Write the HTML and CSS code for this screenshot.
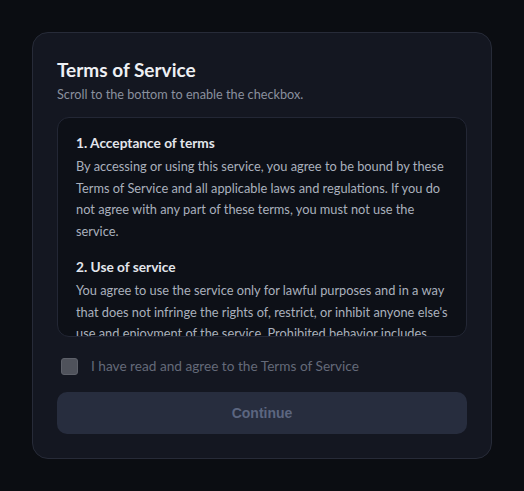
FILE: index.html
```html
<!DOCTYPE html>
<html lang="en">
<head>
<meta charset="utf-8">
<title>Terms of Service</title>
<link rel="stylesheet" href="styles.css">
</head>
<body>
<main class="page">
  <section class="card">
    <h1 class="title">Terms of Service</h1>
    <p class="subtitle">Scroll to the bottom to enable the checkbox.</p>
    <div class="terms">
      <h2 class="terms-heading">1. Acceptance of terms</h2>
      <p class="terms-text">By accessing or using this service, you agree to be bound by these Terms of Service and all applicable laws and regulations. If you do not agree with any part of these terms, you must not use the service.</p>
      <h2 class="terms-heading">2. Use of service</h2>
      <p class="terms-text">You agree to use the service only for lawful purposes and in a way that does not infringe the rights of, restrict, or inhibit anyone else's use and enjoyment of the service. Prohibited behavior includes harassing or causing distress or inconvenience to any other user.</p>
    </div>
    <label class="agree">
      <span class="box"></span>
      <span class="agree-text">I have read and agree to the Terms of Service</span>
    </label>
    <button class="continue" disabled>Continue</button>
  </section>
</main>
</body>
</html>
```

FILE: styles.css
```css
* { box-sizing: border-box; }
html, body { margin: 0; padding: 0; }
body {
  background: #0b0d12;
  font-family: Lato, "Open Sans", sans-serif;
  width: 524px;
  height: 491px;
  overflow: hidden;
}
.page {
  padding: 32px 32px 0 32px;
}
.card {
  width: 460px;
  height: 427px;
  background: #141721;
  border: 1px solid #272b38;
  border-radius: 16px;
  padding: 24px 24px 0 24px;
  display: flex;
  flex-direction: column;
}
.title {
  margin: 1px 0 0 0;
  font-size: 19px;
  font-weight: 700;
  color: #eef0f4;
  line-height: 24px;
}
.subtitle {
  margin: 3px 0 0 0;
  font-size: 12.7px;
  color: #8a909e;
  line-height: 18px;
}
.terms {
  margin-top: 14px;
  height: 220px;
  overflow: hidden;
  background: #0d1017;
  border: 1px solid #232735;
  border-radius: 12px;
  padding: 14px 18px;
}
.terms-heading {
  margin: 0 0 2px 0;
  font-size: 13.7px;
  font-weight: 700;
  color: #e3e6ec;
  line-height: 22px;
}
.terms-text {
  margin: 0 0 13px 0;
  font-size: 12.8px;
  color: #aab0bd;
  line-height: 21.7px;
}
.agree {
  display: flex;
  align-items: center;
  gap: 13px;
  margin-top: 19px;
  padding-left: 4px;
}
.box {
  width: 17px;
  height: 17px;
  border-radius: 3px;
  background: #4f525b;
  border: 1px solid #5e616a;
}
.agree-text {
  font-size: 13.65px;
  color: #646a79;
  line-height: 20px;
}
.continue {
  margin-top: 16px;
  height: 42px;
  width: 100%;
  border: none;
  border-radius: 10px;
  background: #272d3e;
  color: #5c6680;
  font-family: "Liberation Sans", Arial, sans-serif;
  font-size: 14px;
  font-weight: 700;
}
```
